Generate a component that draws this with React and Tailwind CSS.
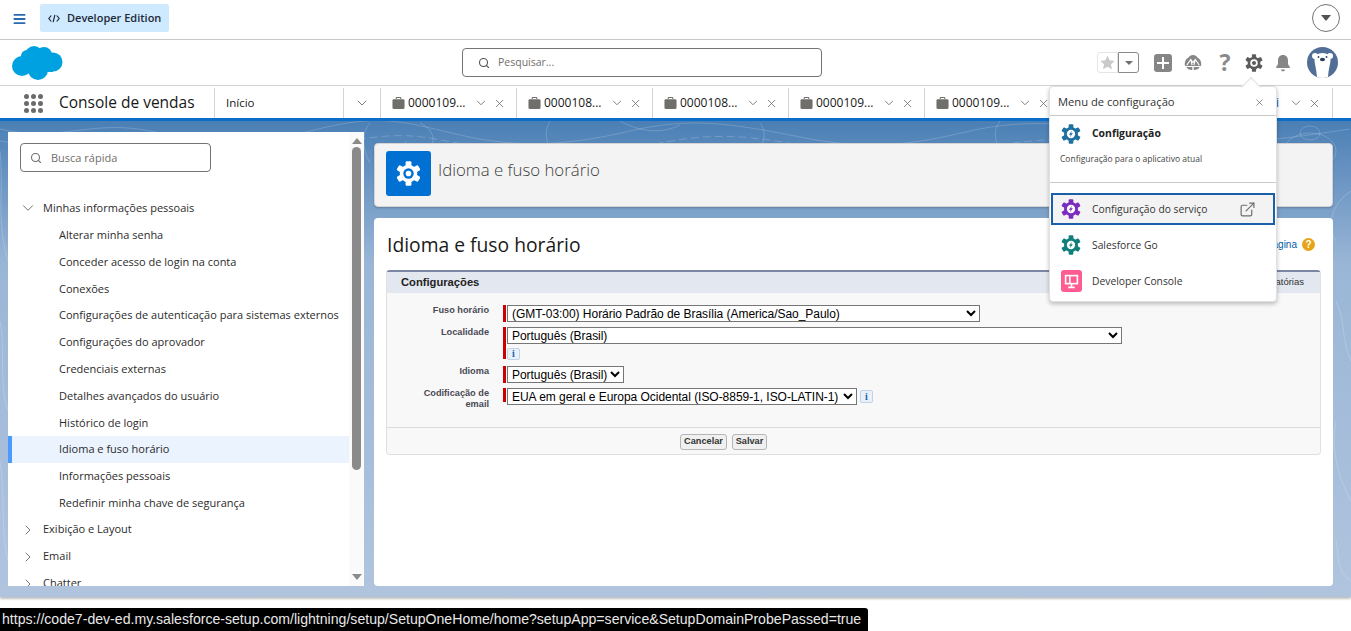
import { ChevronDown, ChevronRight, ExternalLink, Search, X } from "lucide-react";

const leafs = [
  "Alterar minha senha",
  "Conceder acesso de login na conta",
  "Conexões",
  "Configurações de autenticação para sistemas externos",
  "Configurações do aprovador",
  "Credenciais externas",
  "Detalhes avançados do usuário",
  "Histórico de login",
  "Idioma e fuso horário",
  "Informações pessoais",
  "Redefinir minha chave de segurança",
];

const tabs = ["0000109...", "0000108...", "0000108...", "0000109...", "0000109..."];

const selectCls =
  "block h-[17px] border border-[#767676] bg-white pr-0 pl-0 text-[12px] leading-[14px] tracking-[-0.04px] text-black";

function Cloud({ className }) {
  return (
    <svg viewBox="0 0 52 36" className={className} fill="#00a1e0">
      <circle cx="11" cy="21" r="10" />
      <circle cx="23" cy="10" r="9" />
      <circle cx="33" cy="10" r="8" />
      <circle cx="42" cy="17" r="9.5" />
      <circle cx="27" cy="25" r="10" />
      <circle cx="16" cy="11" r="6" />
      <rect x="10" y="10" width="32" height="17" />
    </svg>
  );
}

// six chunky teeth, top tooth upright like the SLDS setup icon
function Gear({ className, color = "#fff", hole = "#fff", bolt }) {
  return (
    <svg viewBox="-12 -12 24 24" className={className}>
      <circle r="8.4" fill={color} />
      {[0, 60, 120, 180, 240, 300].map((a) => (
        <rect key={a} x="-2.8" y="-11.8" width="5.6" height="6" rx="1.2" fill={color} transform={`rotate(${a})`} />
      ))}
      {bolt ? (
        <>
          <circle r="5" fill="#fff" />
          <path d="M1.1-3.8L-2.5.9h2.2l-1 3 3.6-4.7H.1z" fill={color} />
        </>
      ) : (
        <>
          <circle r="5" fill={hole} />
          <circle r="2.7" fill={color} />
        </>
      )}
    </svg>
  );
}

function Topo() {
  return (
    <svg className="absolute inset-0 h-full w-full" viewBox="0 0 1351 476" preserveAspectRatio="none" fill="none" stroke="#fff" strokeOpacity="0.18">
      <path d="M0 8c60 14 90-10 150 2s90 18 160 0 90-10 150 4 110 10 170-4 100-8 170 6 110 8 170-6 120-6 180 6 120 4 200-8" />
      <path d="M0 20c70 12 100-8 170 4s100 12 170-2 80-6 150 6 110 6 170-6 100-6 160 6 120 6 180-4 120-6 180 4" strokeDasharray="8 4" />
      <path d="M370 2c-10 10-6 30 0 40M420 2c14 6 18 20 6 30s-24 2-20-12M550 0c-8 14-2 28 8 38M620 0c18 10 40 14 60 4M760 2c10 14 0 26-8 36M1000 0c-10 14-2 26 6 38" />
      <ellipse cx="1310" cy="12" rx="10" ry="7" />
      <ellipse cx="1310" cy="30" rx="26" ry="18" />
      <path d="M1336 120c-12-20 0-40 15-50M1336 180c10 20 5 40 15 60M1336 300c-6 30 4 60 15 80M1336 420c4 20 0 30 15 40" />
      <path d="M0 30c4 40-4 70 8 110M0 200c6 30-2 60 8 90M0 340c6 40 0 70 8 100" />
    </svg>
  );
}

function Bag() {
  return (
    <svg viewBox="0 0 14 14" className="h-[14px] w-[13px] shrink-0" fill="#706e6b">
      <path d="M4 3V1.6C4 1 4.5.6 5 .6h4c.6 0 1 .4 1 1V3H8.9V1.7H5.1V3z" />
      <rect x="0.5" y="3" width="13" height="10.4" rx="1.2" />
    </svg>
  );
}

function TabActions() {
  return (
    <>
      <ChevronDown className="ml-[4px] h-[14px] w-[14px] shrink-0 text-[#706e6b]" strokeWidth={1.5} />
      <X className="ml-[5px] h-[13px] w-[13px] shrink-0 text-[#706e6b]" strokeWidth={1.5} />
    </>
  );
}

function Tab({ label }) {
  return (
    <div className="flex h-full w-[136px] shrink-0 items-center border-r border-[#d4d4d4] pl-[11px]">
      <Bag />
      <span className="ml-[3px] w-[62px] text-[12px] text-[#181818]">{label}</span>
      <TabActions />
    </div>
  );
}

function Info({ className = "" }) {
  return (
    <span className={`flex h-[12px] w-[13px] items-center justify-center rounded-[2px] border border-[#c3d2e4] bg-[#e8f1fb] text-[10px] leading-none font-bold text-[#1b5fa8] [font-family:'Liberation_Serif',serif] ${className}`}>
      i
    </span>
  );
}

function Field({ label, bar = "h-[17px]", mb = "mb-[5px]", children }) {
  return (
    <div className={`flex items-start ${mb}`}>
      <div className="w-[102px] pl-[20px] text-right text-[9.2px] leading-[11px] font-bold text-[#4a4a56]">{label}</div>
      <div className={`ml-[14px] w-[3px] shrink-0 bg-[#c00] ${bar}`} />
      <div className="ml-[1px]">{children}</div>
    </div>
  );
}

function MenuItem({ icon, label, active }) {
  return (
    <div className={`flex items-center text-[10.3px] text-[#333] ${active ? "mx-[1px] my-[2px] h-[32px] border-2 border-[#1b5fa8] bg-[#f3f3f3] pl-[8px]" : "mx-[1px] h-[36px] pl-[10px]"}`}>
      <span className="flex w-[31px] shrink-0 items-center">{icon}</span>
      <span className="pt-[1px]">{label}</span>
      {active && <ExternalLink className="mr-[17px] ml-auto h-[17px] w-[17px] text-[#706e6b]" strokeWidth={1.7} />}
    </div>
  );
}

export default function App() {
  return (
    <div className="relative h-[631px] w-[1351px] overflow-hidden bg-white text-[#181818] [font-family:'Open_Sans','Noto_Sans',sans-serif]">
      {/* barra do navegador */}
      <div className="flex h-[40px] items-start border-b border-[#c9c9c9] pt-[4px]">
        <svg viewBox="0 0 13 11" className="mt-[10px] ml-[13px] h-[10px] w-[13px]" fill="#2a6ab0">
          <rect width="13" height="2" rx="0.5" />
          <rect y="4.5" width="13" height="2" rx="0.5" />
          <rect y="9" width="13" height="2" rx="0.5" />
        </svg>
        <div className="ml-[14px] flex h-[28px] w-[129px] items-center rounded-[2px] bg-[#cfe9fe] pl-[8px] text-[11px] font-semibold text-[#1c2a3a]">
          <svg viewBox="0 0 14 10" className="h-[9px] w-[12px]" fill="none" stroke="#1c2a3a" strokeWidth="1.4">
            <path d="M3.8 1.5L1 5l2.8 3.5M10.2 1.5L13 5l-2.8 3.5M8 .8L6 9.2" />
          </svg>
          <span className="ml-[7px]">Developer Edition</span>
        </div>
        <div className="mr-[11px] ml-auto flex h-[28px] w-[28px] items-center justify-center rounded-full border border-[#747474]">
          <span className="h-0 w-0 border-x-[5px] border-t-[6px] border-x-transparent border-t-[#54514e]" />
        </div>
      </div>

      {/* cabecalho global */}
      <div className="flex h-[46px] items-center border-b border-[#d4d4d4]">
        <div className="w-[462px] shrink-0 pl-[11px]">
          <Cloud className="h-[36px] w-[52px]" />
        </div>
        <div className="flex h-[29px] w-[360px] shrink-0 items-center rounded-[4px] border border-[#747474] pl-[15px] text-[10.5px] text-[#706e6b]">
          <Search className="h-[12px] w-[12px] text-[#54514e]" strokeWidth={2.2} />
          <span className="ml-[8px] pt-[1px]">Pesquisar...</span>
        </div>
        <div className="flex flex-1 items-center justify-end pr-[13px]">
          <div className="flex h-[21px] w-[42px] items-stretch">
            <div className="flex w-[21px] items-center justify-center rounded-l-[3px] border border-[#e5e5e5]">
              <svg viewBox="0 0 14 14" className="h-[15px] w-[15px]" fill="#c9c9c9">
                <path d="M7 .6l2 4.4 4.7.5-3.5 3.2 1 4.7L7 11l-4.2 2.4 1-4.7L.3 5.5 5 5z" />
              </svg>
            </div>
            <div className="flex w-[21px] items-center justify-center rounded-r-[3px] border border-[#8a8a8a]">
              <span className="h-0 w-0 border-x-[4px] border-t-[4px] border-x-transparent border-t-[#706e6b]" />
            </div>
          </div>
          <div className="ml-[15px] flex h-[18px] w-[18px] items-center justify-center rounded-[3px] bg-[#868686]">
            <svg viewBox="0 0 12 12" className="h-[12px] w-[12px]" stroke="#fff" strokeWidth="2"><path d="M6 0v12M0 6h12" /></svg>
          </div>
          <svg viewBox="0 0 20 18" className="ml-[12px] h-[17px] w-[18px]">
            <path d="M10 .6c2.4 0 4 1.2 5 3 2.4.8 4.2 3.6 4.2 7 0 1-.2 1.800-.6 2.400H1.400C1 12.400.8 11.600.8 10.600c0-3.400 1.800-6.200 4.200-7 1-1.800 2.600-3 5-3z" fill="#868686" />
            <path d="M2.600 14c1 2 3 3.400 6.600 3.400V14zM17.400 14c-1 2-3 3.400-6.600 3.400V14z" fill="#868686" />
            <path d="M3 12l4.500-6.500L10 9l2.500-3.500L17 12M7.500 5.500L9 12M12.500 5.500L11 12" fill="none" stroke="#fff" strokeWidth="1.2" />
          </svg>
          <span className="ml-[14px] w-[18px] text-center text-[23px] leading-none font-bold text-[#8a8a8a]">?</span>
          <Gear className="ml-[11px] h-[18px] w-[18px]" color="#5c5c5c" hole="#fff" />
          <svg viewBox="0 0 18 18" className="ml-[11px] h-[18px] w-[18px]" fill="#868686">
            <path d="M9 1c3.200 0 5 2.400 5 5.400v3.200c0 1.200.8 2 1.600 2.800.6.6.2 1.600-.6 1.600H3c-.8 0-1.200-1-.6-1.600C3.200 11.600 4 10.800 4 9.600V6.400C4 3.400 5.800 1 9 1z" />
            <path d="M6.800 15.400h4.400c-.2 1-1 1.800-2.200 1.800s-2-.8-2.200-1.800z" />
          </svg>
          <div className="ml-[15px] flex h-[31px] w-[31px] items-end justify-center overflow-hidden rounded-full bg-[#516f96]">
            <svg viewBox="0 0 31 31" className="h-[31px] w-[31px]" fill="#fff">
              <circle cx="8" cy="9" r="3" />
              <circle cx="23" cy="9" r="3" />
              <path d="M15.5 6c5 0 8 3 8 7 0 4-2 8-2.500 18H10C9.500 21 7.500 17 7.500 13c0-4 3-7 8-7z" />
              <ellipse cx="15.5" cy="12.5" rx="2.6" ry="1.8" fill="#2a3f5c" />
              <circle cx="11.5" cy="10" r="0.9" fill="#2a3f5c" />
              <circle cx="19.5" cy="10" r="0.9" fill="#2a3f5c" />
            </svg>
          </div>
        </div>
      </div>

      {/* navegacao do console */}
      <div className="flex h-[35px] items-stretch border-b-[3px] border-[#0b6fc9] pt-[2px]">
        <div className="flex w-[215px] shrink-0 items-center border-r border-[#d4d4d4] pl-[24px]">
          <div className="grid grid-cols-3 gap-[2px]">
            {[0, 1, 2, 3, 4, 5, 6, 7, 8].map((i) => (
              <span key={i} className="h-[5px] w-[5px] rounded-full bg-[#6b6b6b]" />
            ))}
          </div>
          <span className="ml-[16px] text-[15.5px] whitespace-nowrap text-[#181818]">Console de vendas</span>
        </div>
        <div className="flex w-[129px] shrink-0 items-center border-r border-[#d4d4d4] pl-[11px] text-[11.5px]">Início</div>
        <div className="flex w-[37px] shrink-0 items-center justify-center border-r border-[#d4d4d4]">
          <ChevronDown className="h-[16px] w-[16px] text-[#706e6b]" strokeWidth={1.4} />
        </div>
        {tabs.map((t, i) => (
          <Tab key={i} label={t} />
        ))}
        {/* a sexta aba fica toda atras do menu, a setima so mostra o fim do titulo */}
        <div className="h-full w-[136px] shrink-0 border-r border-[#d4d4d4]" />
        <div className="flex h-full w-[136px] shrink-0 items-center justify-end border-r border-[#d4d4d4] pr-[11px]">
          <span className="mr-[6px] text-[12px] text-[#0b5cab]">i</span>
          <TabActions />
        </div>
      </div>

      {/* area principal */}
      <div className="relative flex h-[476px] gap-[10px] bg-gradient-to-b from-[#4a7fb5] via-[#9ab6d6] via-[30%] to-[#b0c4de] pt-[11px] pr-[18px] pb-[11px] pl-[8px] shadow-[0_2px_2px_rgba(0,0,0,0.25)]">
        <Topo />
        <div className="relative flex h-[454px] w-[356px] shrink-0 overflow-hidden bg-white">
          <div className="w-[341px] shrink-0">
            <div className="mt-[11px] ml-[12px] flex h-[29px] w-[191px] items-center rounded-[4px] border border-[#747474] pl-[9px] text-[11px] text-[#706e6b]">
              <Search className="h-[12px] w-[12px] text-[#706e6b]" strokeWidth={2.2} />
              <span className="ml-[9px] pt-[1px]">Busca rápida</span>
            </div>
            <div className="mt-[23px] text-[11px] text-[#2b2b2b]">
              <div className="flex h-[26.8px] items-center pl-[11px]">
                <ChevronDown className="h-[18px] w-[18px] text-[#706e6b]" strokeWidth={1.3} />
                <span className="ml-[6px]">Minhas informações pessoais</span>
              </div>
              {leafs.map((l) =>
                l === "Idioma e fuso horário" ? (
                  <div key={l} className="flex h-[26.8px] items-center border-l-4 border-[#4a9bff] bg-[#eaf3fe] pl-[47px]">{l}</div>
                ) : (
                  <div key={l} className="flex h-[26.8px] items-center pl-[51px]">{l}</div>
                ),
              )}
              {["Exibição e Layout", "Email", "Chatter"].map((l) => (
                <div key={l} className="flex h-[26.8px] items-center pl-[12px]">
                  <ChevronRight className="h-[16px] w-[16px] text-[#706e6b]" strokeWidth={1.4} />
                  <span className="ml-[7px] pb-[1px]">{l}</span>
                </div>
              ))}
            </div>
          </div>
          <div className="flex h-full w-[15px] shrink-0 flex-col items-center bg-[#fafafa] pt-[6px]">
            <span className="h-0 w-0 border-x-[5px] border-b-[6px] border-x-transparent border-b-[#8a8a8a]" />
            <span className="mt-[3px] h-[323px] w-[9px] rounded-full bg-[#8a8a8a]" />
            <span className="mt-auto mb-[6px] h-0 w-0 border-x-[5px] border-t-[6px] border-x-transparent border-t-[#8a8a8a]" />
          </div>
        </div>

        <div className="relative flex min-w-0 flex-1 flex-col pt-[11px]">
          <div className="flex h-[64px] shrink-0 items-start rounded-[4px] border border-[#d4d4d4] bg-[#f3f3f3] pt-[7px] pl-[11px] shadow-[0_1px_2px_rgba(0,0,0,0.2)]">
            <div className="flex h-[45px] w-[45px] items-center justify-center rounded-[3px] bg-[#0070d2]">
              <Gear className="h-[25px] w-[25px]" color="#fff" hole="#0070d2" />
            </div>
            <span className="ml-[7px] pt-[6px] text-[16.8px] font-light text-[#3e3e3c]">Idioma e fuso horário</span>
          </div>
          <div className="mt-[11px] flex-1 rounded-[4px] bg-white px-[12px] pt-[15px] [font-family:'Liberation_Sans',Arial,sans-serif]">
            <div className="flex h-[23px] items-center justify-between">
              <span className="pl-[1px] text-[19.3px] leading-none text-[#1a1a1a] [font-family:'Open_Sans',sans-serif]">Idioma e fuso horário</span>
              <div className="flex items-center text-[10px] text-[#015ba7]">
                <span>Ajuda para esta página</span>
                <span className="mr-[6px] ml-[5px] flex h-[13px] w-[13px] items-center justify-center rounded-full bg-[#e8a317] text-[10px] font-bold text-white">?</span>
              </div>
            </div>
            <div className="mt-[14px] h-[185px] rounded-[4px] border border-t-2 border-[#e0e0e0] border-t-[#7a86a4] bg-[#f8f8f8]">
              <div className="flex h-[21px] items-center justify-between bg-[#e3e7f0] pr-[16px] pl-[14px]">
                <span className="text-[11.2px] font-bold text-[#222]">Configurações</span>
                <span className="text-[9.5px] text-[#333]">= Informações obrigatórias</span>
              </div>
              <div className="h-[135px] border-b border-[#dcdcdc] pt-[12px]">
                <Field label="Fuso horário">
                  <select className={`${selectCls} w-[473px]`}>
                    <option>(GMT-03:00) Horário Padrão de Brasília (America/Sao_Paulo)</option>
                  </select>
                </Field>
                <Field label="Localidade" bar="h-[32px]" mb="mb-[6px]">
                  <select className={`${selectCls} w-[615px]`}>
                    <option>Português (Brasil)</option>
                  </select>
                  <Info className="mt-[4px]" />
                </Field>
                <Field label="Idioma">
                  <select className={`${selectCls} w-[117px]`}>
                    <option>Português (Brasil)</option>
                  </select>
                </Field>
                <Field label="Codificação de email" bar="h-[14px]" mb="">
                  <div className="flex items-center">
                    <select className={`${selectCls} w-[350px]`}>
                      <option>EUA em geral e Europa Ocidental (ISO-8859-1, ISO-LATIN-1)</option>
                    </select>
                    <Info className="ml-[3px] h-[13px]" />
                  </div>
                </Field>
              </div>
              <div className="flex gap-[5px] pt-[6px] pl-[293px]">
                <button className="h-[16px] w-[47px] rounded-[3px] border border-[#b5b5b5] bg-[#f0f0f0] pb-[1px] text-[9.2px] font-bold text-[#333]">Cancelar</button>
                <button className="h-[16px] w-[35px] rounded-[3px] border border-[#b5b5b5] bg-[#f0f0f0] pb-[1px] text-[9.2px] font-bold text-[#333]">Salvar</button>
              </div>
            </div>
          </div>
        </div>
      </div>

      {/* menu de configuracao */}
      <div className="absolute top-[86px] left-[1049px] w-[228px] rounded-[4px] border border-[#e0e0e0] bg-white shadow-[0_2px_4px_rgba(0,0,0,0.25)]">
        <span className="absolute -top-[7px] right-[18px] h-[14px] w-[14px] rotate-45 border-t border-l border-[#e0e0e0] bg-white" />
        <div className="relative flex h-[29px] items-center justify-between border-b border-[#c9c9c9] pt-[3px] pr-[11px] pl-[8px] text-[11.2px] text-[#333]">
          <span>Menu de configuração</span>
          <X className="h-[11px] w-[11px] text-[#706e6b]" strokeWidth={1.6} />
        </div>
        <div className="h-[67px] border-b border-[#c9c9c9] pt-[8px] pl-[11px]">
          <div className="flex items-center">
            <Gear className="h-[20px] w-[20px]" color="#1f6f9f" bolt />
            <span className="ml-[11px] text-[10.4px] font-bold text-[#222]">Configuração</span>
          </div>
          <div className="mt-[9px] -ml-[1px] text-[8.5px] text-[#444]">Configuração para o aplicativo atual</div>
        </div>
        <div className="pt-[8px] pb-[2px]">
          <MenuItem active label="Configuração do serviço" icon={<Gear className="h-[20px] w-[20px]" color="#7b2cbf" bolt />} />
          <MenuItem label="Salesforce Go" icon={<Gear className="h-[20px] w-[20px]" color="#0f7f7a" bolt />} />
          <MenuItem
            label="Developer Console"
            icon={
              <span className="flex h-[22px] w-[21px] items-center justify-center rounded-[3px] bg-[#ff5d92]">
                <svg viewBox="0 0 14 14" className="h-[15px] w-[15px]" fill="none" stroke="#fff" strokeWidth="1.5">
                  <rect x="1.5" y="1.5" width="11" height="7.5" />
                  <path d="M7 9v3M4 12.5h6M5.5 2v6.5" />
                </svg>
              </span>
            }
          />
        </div>
      </div>

      {/* url do link em hover */}
      <div className="absolute bottom-0 left-0 flex h-[23px] w-[868px] items-center rounded-tr-[3px] bg-black pl-[2px] text-[14.1px] whitespace-nowrap text-[#e8e8e8] [font-family:'Liberation_Sans',Arial,sans-serif]">
        https://code7-dev-ed.my.salesforce-setup.com/lightning/setup/SetupOneHome/home?setupApp=service&SetupDomainProbePassed=true
      </div>
    </div>
  );
}
